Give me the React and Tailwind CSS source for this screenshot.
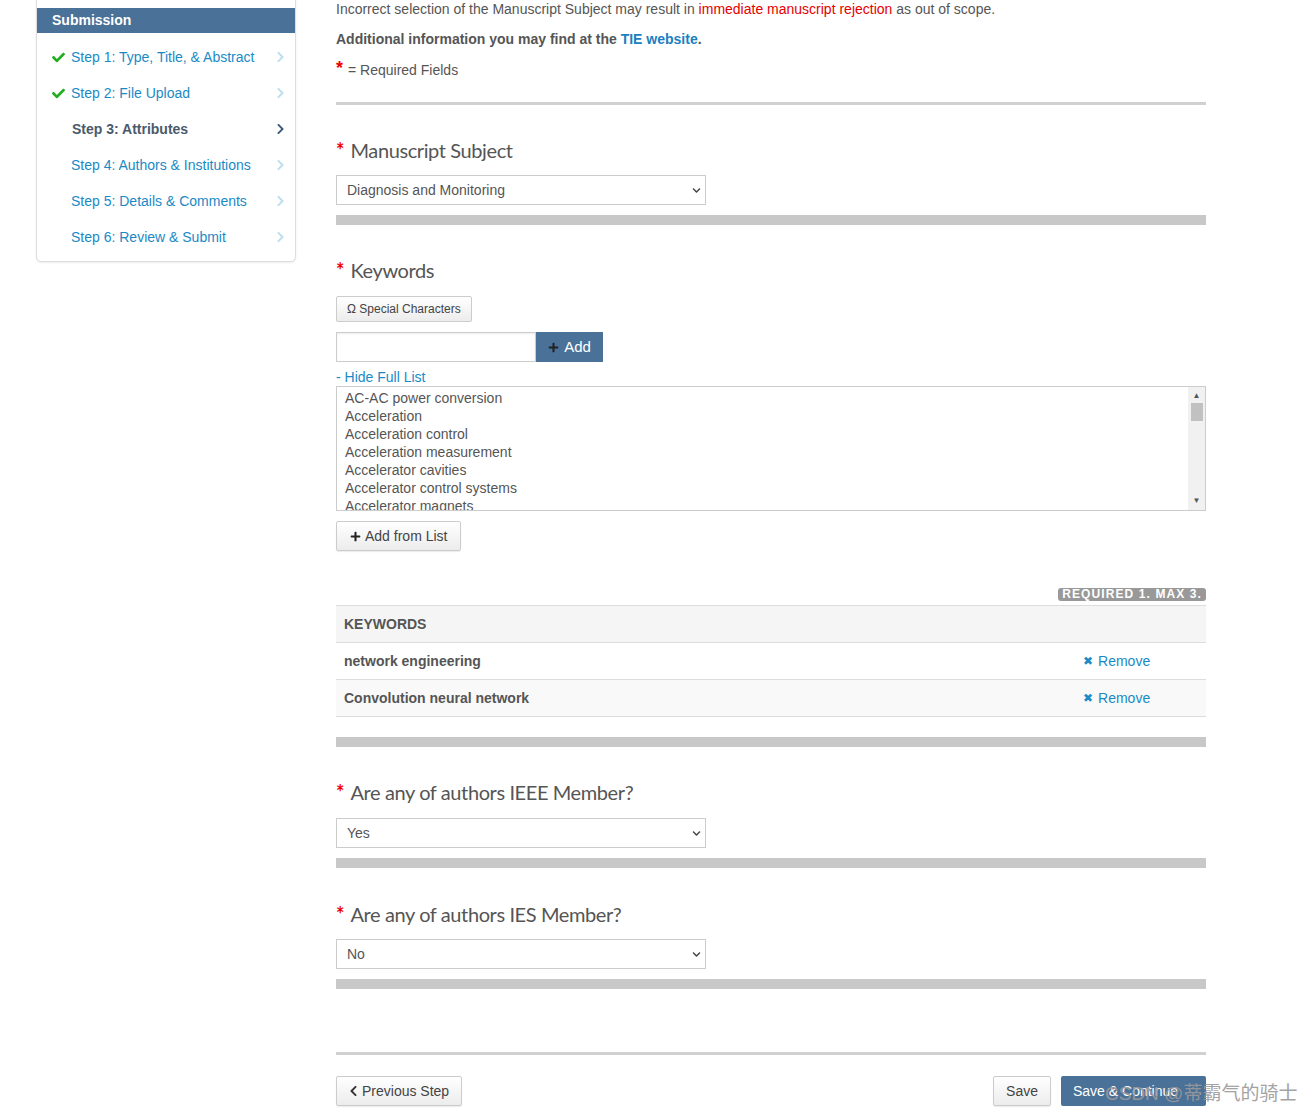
import React from 'react';
import { FaCheck, FaChevronRight, FaChevronLeft, FaPlus, FaChevronDown } from 'react-icons/fa';

const steps = [
  { label: 'Step 1: Type, Title, & Abstract', done: true },
  { label: 'Step 2: File Upload', done: true },
  { label: 'Step 3: Attributes', active: true },
  { label: 'Step 4: Authors & Institutions' },
  { label: 'Step 5: Details & Comments' },
  { label: 'Step 6: Review & Submit' },
];

const listItems = [
  'AC-AC power conversion',
  'Acceleration',
  'Acceleration control',
  'Acceleration measurement',
  'Accelerator cavities',
  'Accelerator control systems',
  'Accelerator magnets',
];

const keywords = ['network engineering', 'Convolution neural network'];

const Heading = ({ children }) => (
  <h2 className="flex items-baseline text-[20px] tracking-[-0.4px] text-[#555] leading-none" style={{ fontFamily: 'Lato, sans-serif' }}>
    <span className="text-[#e00] text-[20px] font-bold mr-[6px] tracking-normal">*</span>
    {children}
  </h2>
);

const FakeSelect = ({ value }) => (
  <div className="flex items-center justify-between w-[370px] h-[30px] border border-[#ccc] bg-white pl-[10px] pr-[4px] text-[14px] text-[#555]">
    <span>{value}</span>
    <FaChevronDown className="w-[9px] h-[9px] text-[#444]" />
  </div>
);

const GrayBar = () => <div className="h-[10px] bg-[#c8c8c8]" />;

export default function App() {
  return (
    <div className="relative min-h-[1112px] bg-white text-[14px] text-[#555]" style={{ fontFamily: '"Liberation Sans", Arial, sans-serif' }}>
      <div className="flex">
        {/* Sidebar */}
        <div className="ml-[36px] w-[260px] shrink-0">
          <div className="-mt-px border border-[#ddd] rounded-b-[5px] bg-white pt-[8px] pb-[6px] shadow-[0_1px_2px_rgba(0,0,0,0.08)]">
            <div className="h-[25px] bg-[#4a7198] text-white font-bold text-[14px] flex items-center pl-[15px]">
              Submission
            </div>
            <ul className="pt-[6px]">
              {steps.map((s) => (
                <li key={s.label} className="h-[36px] flex items-center pl-[15px] pr-[10px]">
                  <span className="w-[19px] shrink-0">
                    {s.done && <FaCheck className="w-[13px] h-[13px] text-[#1fae1f]" />}
                  </span>
                  <span className={`flex-1 ${s.active ? 'font-bold text-[#4b5a6b] ml-[1px]' : 'text-[#1a8ac6]'}`}>{s.label}</span>
                  <FaChevronRight className={`w-[9px] h-[12px] ${s.active ? 'text-[#3e5a78]' : 'text-[#bcdcef]'}`} />
                </li>
              ))}
            </ul>
          </div>
        </div>

        {/* Main */}
        <div className="ml-[40px] w-[870px]">
          <p className="leading-[18px]">
            Incorrect selection of the Manuscript Subject may result in{' '}
            <span className="text-[#e60000]">immediate manuscript rejection</span> as out of scope.
          </p>
          <p className="mt-[12px] font-bold leading-[18px]">
            Additional information you may find at the <span className="text-[#1a80c0]">TIE website</span>.
          </p>
          <p className="mt-[13px] leading-[18px] flex items-start">
            <span className="text-[#e00] text-[18px] leading-[14px] mr-[5px] font-bold">*</span>
            = Required Fields
          </p>
          <div className="mt-[23px] h-[3px] bg-[#d0d0d0]" />

          {/* Manuscript Subject */}
          <div className="mt-[35px]">
            <Heading>Manuscript Subject</Heading>
          </div>
          <div className="mt-[15px]">
            <FakeSelect value="Diagnosis and Monitoring" />
          </div>
          <div className="mt-[10px]">
            <GrayBar />
          </div>

          {/* Keywords */}
          <div className="mt-[35px]">
            <Heading>Keywords</Heading>
          </div>
          <button className="mt-[16px] h-[26px] px-[10px] border border-[#ccc] rounded-[2px] bg-gradient-to-b from-white to-[#ececec] text-[12px] text-[#444] flex items-center">
            Ω Special Characters
          </button>
          <div className="mt-[10px] flex">
            <div className="w-[200px] h-[30px] border border-[#ccc] bg-white shadow-[inset_0_1px_2px_rgba(0,0,0,0.08)]" />
            <button className="w-[67px] h-[30px] bg-[#4a7198] text-white text-[15px] flex items-center justify-center gap-[5px]">
              <FaPlus className="w-[11px] h-[11px] text-[#222]" />
              Add
            </button>
          </div>
          <div className="mt-[6px] text-[#1a8ac6] leading-[18px]">- Hide Full List</div>
          <div className="h-[125px] border border-[#ccc] flex overflow-hidden">
            <div className="flex-1 pl-[8px] pt-[2px]">
              {listItems.map((item) => (
                <div key={item} className="leading-[18px] text-[#555]">{item}</div>
              ))}
            </div>
            <div className="w-[17px] bg-[#f1f1f1] flex flex-col items-center">
              <span className="text-[8px] text-[#555] leading-none mt-[5px]">▲</span>
              <div className="w-[12px] h-[18px] bg-[#c1c1c1] mt-[3px]" />
              <span className="flex-1" />
              <span className="text-[8px] text-[#555] leading-none mb-[5px]">▼</span>
            </div>
          </div>
          <button className="mt-[10px] h-[30px] px-[13px] border border-[#ccc] rounded-[2px] bg-gradient-to-b from-white to-[#ececec] text-[14px] text-[#444] flex items-center gap-[4px] shadow-[0_1px_1px_rgba(0,0,0,0.08)]">
            <FaPlus className="w-[11px] h-[11px] text-[#222]" />
            Add from List
          </button>

          <div className="mt-[37px] flex justify-end">
            <span className="bg-[#999] text-white text-[12px] font-bold tracking-[1.1px] leading-[13px] px-[4px] rounded-[3px]">
              REQUIRED 1. MAX 3.
            </span>
          </div>
          <div className="mt-[4px] border-t border-[#ddd]">
            <div className="h-[37px] bg-[#f5f5f5] border-b border-[#ddd] flex items-center pl-[8px] font-bold text-[#555]">
              KEYWORDS
            </div>
            {keywords.map((k, i) => (
              <div key={k} className={`h-[37px] border-b border-[#ddd] flex items-center pl-[8px] ${i % 2 ? 'bg-[#f9f9f9]' : 'bg-white'}`}>
                <span className="flex-1 font-bold text-[#555]">{k}</span>
                <span className="w-[123px] flex items-center gap-[5px] text-[#1a8ac6]">
                  <span className="text-[12px] leading-none" style={{ fontFamily: '"DejaVu Sans", sans-serif' }}>✖</span>
                  Remove
                </span>
              </div>
            ))}
          </div>
          <div className="mt-[20px]">
            <GrayBar />
          </div>

          {/* IEEE */}
          <div className="mt-[35px]">
            <Heading>Are any of authors IEEE Member?</Heading>
          </div>
          <div className="mt-[16px]">
            <FakeSelect value="Yes" />
          </div>
          <div className="mt-[10px]">
            <GrayBar />
          </div>

          {/* IES */}
          <div className="mt-[36px]">
            <Heading>Are any of authors IES Member?</Heading>
          </div>
          <div className="mt-[15px]">
            <FakeSelect value="No" />
          </div>
          <div className="mt-[10px]">
            <GrayBar />
          </div>

          <div className="mt-[63px] h-[3px] bg-[#d0d0d0]" />
          <div className="mt-[21px] flex items-center">
            <button className="h-[30px] px-[12px] border border-[#ccc] rounded-[2px] bg-gradient-to-b from-white to-[#ececec] text-[14px] text-[#444] flex items-center gap-[4px] shadow-[0_1px_1px_rgba(0,0,0,0.08)]">
              <FaChevronLeft className="w-[9px] h-[12px] text-[#333]" />
              Previous Step
            </button>
            <span className="flex-1" />
            <button className="h-[30px] px-[12px] border border-[#ccc] rounded-[2px] bg-gradient-to-b from-white to-[#ececec] text-[14px] text-[#444] shadow-[0_1px_1px_rgba(0,0,0,0.08)]">
              Save
            </button>
            <button className="ml-[10px] h-[30px] w-[145px] rounded-[2px] bg-[#4a7198] text-white text-[14px] text-left pl-[12px]">
              Save &amp; Continue
            </button>
          </div>
        </div>
      </div>

      {/* watermark */}
      <div
        className="absolute left-[1105px] top-[1084px] text-[19px] text-[#9a9a9a] opacity-90 leading-none whitespace-nowrap"
        style={{ fontFamily: '"Liberation Sans", "Noto Sans CJK SC", sans-serif' }}
      >
        CSDN @蒂霸气的骑士
      </div>
    </div>
  );
}
